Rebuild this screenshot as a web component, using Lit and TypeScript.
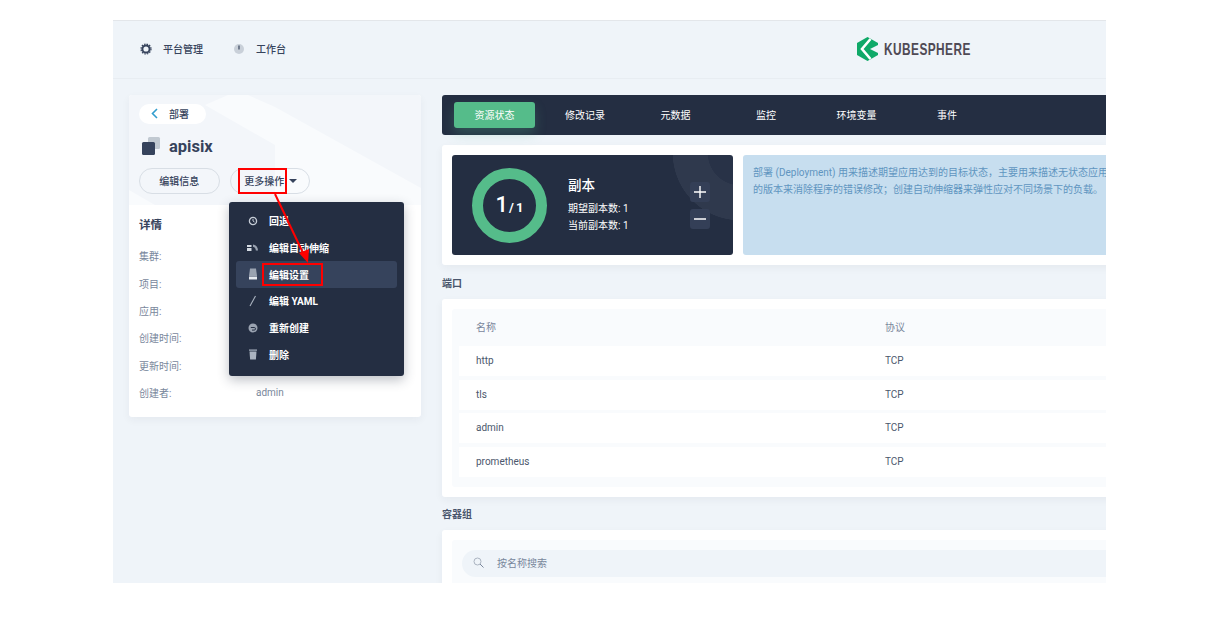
import { LitElement, html, css, svg } from "lit";
import { customElement } from "lit/decorators.js";

const rows = [["http", "TCP"], ["tls", "TCP"], ["admin", "TCP"], ["prometheus", "TCP"]];
const tabs = ["资源状态", "修改记录", "元数据", "监控", "环境变量", "事件"];
const details = [["集群:", ""], ["项目:", ""], ["应用:", ""], ["创建时间:", ""], ["更新时间:", ""], ["创建者:", "admin"]];

const menuIcons = [
  svg`<circle cx="6" cy="6" r="3.6" fill="none" stroke="#c5ccd6" stroke-width="1.3"/><path d="M6 3.8V6l1.5 1" fill="none" stroke="#c5ccd6"/>`,
  svg`<path d="M0 3h4.500v2H0zM0 6h4.500v3H0z" fill="#d5dbe3"/><path d="M6 2.500c3 .3 5 2.800 5 6H8.800c0-1.800-1-3.200-2.800-3.700z" fill="#9aa3b1"/>`,
  svg`<path d="M3 .5h6l1 7.500H2z" fill="#9aa3b1"/><path d="M2 8.500h8v3H2z" fill="#e6eaf0"/>`,
  svg`<path d="M3 11 8.500 1" stroke="#aab3c0" stroke-width="1.100" fill="none"/>`,
  svg`<circle cx="6" cy="6" r="4.500" fill="#9aa3b1"/><path d="M3.800 5.500h3.400a1.300 1.300 0 0 1 0 2.600H5" stroke="#242e42" fill="none"/>`,
  svg`<path d="M2 1.500h8v1.200H2z" fill="#aab3c0"/><path d="M2.500 3.400h7l-.6 8H3.100z" fill="#aab3c0"/>`,
];
const menu = ["回退", "编辑自动伸缩", "编辑设置", "编辑 YAML", "重新创建", "删除"];

@customElement("app-root")
export class AppRoot extends LitElement {
  static styles = css`
    :host { display: block; height: 621px; background: #fff; font-family: Roboto, "Noto Sans CJK SC", sans-serif; font-size: 10px; color: #36435c; overflow: hidden; }
    .frame { position: relative; margin: 20px 0 0 113px; width: 993px; height: 563px; background: #eff4f9; border-top: 1px solid #e3e6ea; box-sizing: border-box; overflow: hidden; }
    .top { height: 58px; display: flex; align-items: center; padding: 0 0 2px 27px; border-bottom: 1px solid #e8edf2; box-sizing: border-box; position: relative; }
    .nav { display: flex; align-items: center; gap: 8px; font-weight: 500; margin-right: 31px; }
    .nav + .nav { margin-left: -1px; }
    .nav svg { width: 12px; height: 12px; margin-right: 3px; }
    .logo { position: absolute; left: 744px; top: 16px; display: flex; align-items: center; gap: 6px; font: 700 16.500px "Liberation Sans", sans-serif; color: #4f4a55; }
    .logo span { transform: scaleX(.72); transform-origin: left; letter-spacing: .6px; }
    .body { display: flex; padding: 16px 0 0 16px; gap: 21px; align-items: flex-start; }
    .side { width: 292px; height: 322px; flex: none; background: #fff; border-radius: 3px; box-shadow: 0 3px 8px rgba(36,46,66,.05); }
    .hero { height: 110px; background: #f3f6fa; padding: 9px 10px; box-sizing: border-box; position: relative; overflow: hidden; border-radius: 3px 3px 0 0; }
    .shape { position: absolute; inset: 0; }
    .hero > *:not(.shape) { position: relative; }
    .back { width: 67px; height: 20px; background: #fff; border-radius: 10px; display: flex; align-items: center; gap: 11px; padding: 0 0 1px 12px; box-sizing: border-box; font-weight: 500; }
    .name { display: flex; align-items: center; gap: 8px; margin: 12px 0 0 2px; height: 20px; font-size: 16.500px; font-weight: 700; }
    .btns { display: flex; gap: 10px; margin-top: 12px; }
    .btn { width: 80.500px; height: 26px; border: 1px solid #d8dee5; border-radius: 13px; box-sizing: border-box; display: flex; align-items: center; justify-content: center; gap: 5px; font-weight: 500; padding: 0 0 1px; }
    .more { padding-left: 2px; }
    .caret { width: 0; height: 0; border: 4px solid transparent; border-top: 4px solid #36435c; border-bottom: 0; }
    .detail { padding: 12px 10px; }
    .detail h4 { margin: 0 0 9px; font-size: 11.500px; line-height: 16px; font-weight: 700; }
    .drow { display: flex; height: 27.400px; align-items: center; color: #79879c; }
    .drow span:first-child { width: 117px; }
    .main { width: 720px; flex: none; }
    .tabs { height: 40px; background: #242e42; border-radius: 3px; display: flex; align-items: center; padding-left: 12px; color: #fff; }
    .tab { width: 81px; height: 26px; margin-right: 9.500px; border-radius: 3px; display: flex; align-items: center; justify-content: center; padding-bottom: 2px; box-sizing: border-box; }
    .tab.on { background: #55bc8a; box-shadow: 0 6px 12px rgba(85,188,138,.25); }
    .card { background: #fff; border-radius: 3px; padding: 10px; box-shadow: 0 3px 8px rgba(36,46,66,.05); }
    .status { margin-top: 10px; height: 120px; box-sizing: border-box; display: flex; gap: 10px; }
    .rep { width: 281px; flex: none; background: radial-gradient(circle at 288px -2px, #283247 32px, #2f394d 32.500px, #2f394d 67px, #242e42 67.500px); border-radius: 3px; position: relative; overflow: hidden; display: flex; align-items: center; color: #fff; box-sizing: border-box; padding-left: 20px; }
    .ring { width: 75px; height: 75px; border-radius: 50%; border: 11px solid #55bc8a; box-sizing: border-box; display: flex; align-items: baseline; justify-content: center; line-height: 52px; font-size: 13px; font-weight: 700; flex: none; word-spacing: -1px; }
    .ring b { font-size: 22px; font-weight: 500; margin-right: 1px; }
    .rinfo { margin-left: 21px; line-height: 17px; position: relative; }
    .rinfo h3 { margin: -1px 0 5px; font-size: 13.500px; line-height: 20px; font-weight: 500; }
    .steps { position: absolute; left: 238px; top: 27px; display: flex; flex-direction: column; gap: 7px; }
    .steps div { width: 20px; height: 20px; background: #343f57; border-radius: 3px; display: flex; align-items: center; justify-content: center; }
    .steps svg { width: 14px; height: 14px; }
    .desc { flex: 1; min-width: 0; background: #c7deef; border-radius: 3px; padding: 10px; line-height: 16.500px; color: #5f95c0; white-space: nowrap; overflow: hidden; }
    .label { font-weight: 600; height: 34px; line-height: 38px; color: #4a566c; }
    .label.pods { height: 33px; line-height: 36px; }
    .inner { background: #f9fbfd; border-radius: 3px; padding: 0 0 10px 7px; }
    .thead, .row { display: flex; align-items: center; padding: 0 0 1px 17px; box-sizing: border-box; color: #4b576c; }
    .thead { height: 37px; color: #79879c; padding-bottom: 2px; }
    .row { height: 30px; margin-bottom: 3.500px; background: #fff; }
    .row:last-child { margin-bottom: 0; }
    .c1 { width: 409px; }
    .search { padding: 10px; border-radius: 3px 3px 0 0; background: #f9fbfd; height: 60px; box-sizing: border-box; }
    .sbox { height: 27px; background: #eff4f9; border-radius: 14px; display: flex; align-items: center; padding: 0 0 2px 11px; gap: 13px; color: #79879c; box-sizing: border-box; }
    .sbox svg { width: 11px; height: 11px; }
    .menu { position: absolute; left: 116px; top: 181px; width: 175px; height: 174px; background: #242e42; border-radius: 3px; box-shadow: 0 4px 12px rgba(36,46,66,.3); padding: 6px 7px; box-sizing: border-box; color: #fff; font-weight: 700; }
    .mi { height: 26.700px; display: flex; align-items: center; gap: 10px; padding: 0 0 1px 11px; border-radius: 3px; box-sizing: border-box; }
    .mi.on { background: #36435c; }
    .mi svg { width: 12px; height: 12px; flex: none; }
    .mark { position: absolute; border: 2px solid #f00; box-sizing: border-box; }
    .mark.a { left: 125px; top: 147px; width: 49px; height: 26px; }
    .mark.b { left: 149px; top: 242px; width: 61px; height: 23px; }
    .arrow { position: absolute; left: 0; top: 0; width: 993px; height: 563px; pointer-events: none; }
  `;

  render() {
    return html`<div class="frame">
      <div class="top">
        <div class="nav"><svg viewBox="0 0 12 12"><circle cx="6" cy="6" r="3.600" fill="none" stroke="#36435c" stroke-width="2"/><circle cx="6" cy="6" r="5" fill="none" stroke="#36435c" stroke-width="1.200" stroke-dasharray="1.500 1.120"/></svg>平台管理</div>
        <div class="nav"><svg viewBox="0 0 12 12"><circle cx="6" cy="6" r="5" fill="#c9d0d9"/><path d="M6 2.500v4" stroke="#36435c" stroke-width="1.200"/></svg>工作台</div>
        <div class="logo"><svg width="21" height="24" viewBox="0 0 21 24"><path d="M10.500 0 21 6v12l-10.500 6L0 18V6z" fill="#0fa968"/><path d="M13 12 21 8v8z" fill="#eff4f9"/><path d="M13.500 2 5 12l8.500 10" fill="none" stroke="#fff" stroke-width="2.600"/></svg><span>KUBESPHERE</span></div>
      </div>
      <div class="body">
        <aside class="side">
          <div class="hero">
            <svg class="shape" width="292" height="110"><path d="M76 10 99 0h20l27 12 146 81v17H146V50zM0 95l26 15H0z" fill="#f9fbfd"/></svg>
            <div class="back"><svg width="7" height="11" viewBox="0 0 7 11"><path d="M6 1 1.500 5.500 6 10" fill="none" stroke="#329dce" stroke-width="1.600"/></svg>部署</div>
            <div class="name"><svg width="20" height="20" viewBox="0 0 20 20"><rect x="7" y="1" width="12" height="12" rx="1.500" fill="#c1c9d1"/><rect x="1" y="6" width="13" height="13" rx="1.500" fill="#36435c"/></svg>apisix</div>
            <div class="btns"><div class="btn">编辑信息</div><div class="btn more">更多操作<i class="caret"></i></div></div>
          </div>
          <div class="detail"><h4>详情</h4>
            ${details.map(([a, b]) => html`<div class="drow"><span>${a}</span><span>${b}</span></div>`)}
          </div>
        </aside>
        <main class="main">
          <div class="tabs">${tabs.map((t, i) => html`<div class="tab ${i === 0 ? "on" : ""}">${t}</div>`)}</div>
          <section class="card status">
            <div class="rep">
              <div class="ring"><b>1</b>/ 1</div>
              <div class="rinfo"><h3>副本</h3><div>期望副本数: 1</div><div>当前副本数: 1</div></div>
              <div class="steps">
                <div><svg viewBox="0 0 14 14"><path d="M7 1v12M1 7h12" stroke="#fff" stroke-width="1.400"/></svg></div>
                <div><svg viewBox="0 0 14 14"><path d="M1 7h12" stroke="#fff" stroke-width="1.400"/></svg></div>
              </div>
            </div>
            <div class="desc">部署 (Deployment) 用来描述期望应用达到的目标状态，主要用来描述无状态应用<br>的版本来消除程序的错误修改；创建自动伸缩器来弹性应对不同场景下的负载。</div>
          </section>
          <div class="label">端口</div>
          <section class="card">
            <div class="inner">
              <div class="thead"><div class="c1">名称</div><div>协议</div></div>
              ${rows.map(([a, b]) => html`<div class="row"><div class="c1">${a}</div><div>${b}</div></div>`)}
            </div>
          </section>
          <div class="label pods">容器组</div>
          <section class="card">
            <div class="search"><div class="sbox"><svg viewBox="0 0 11 11"><circle cx="4.500" cy="4.500" r="3.500" fill="none" stroke="#abb4c1"/><path d="M7 7l3.500 3.500" stroke="#79879c"/></svg>按名称搜索</div></div>
          </section>
        </main>
      </div>
      <div class="menu">
        ${menu.map((m, i) => html`<div class="mi ${i === 2 ? "on" : ""}"><svg viewBox="0 0 12 12">${menuIcons[i]}</svg>${m}</div>`)}
      </div>
      <div class="mark a"></div>
      <div class="mark b"></div>
      <svg class="arrow" viewBox="0 0 993 563">
        <path d="M162 173 191 234" stroke="#f00" stroke-width="2" fill="none"/>
        <path d="M195 242 186 232 196 228z" fill="#f00"/>
      </svg>
    </div>`;
  }
}
